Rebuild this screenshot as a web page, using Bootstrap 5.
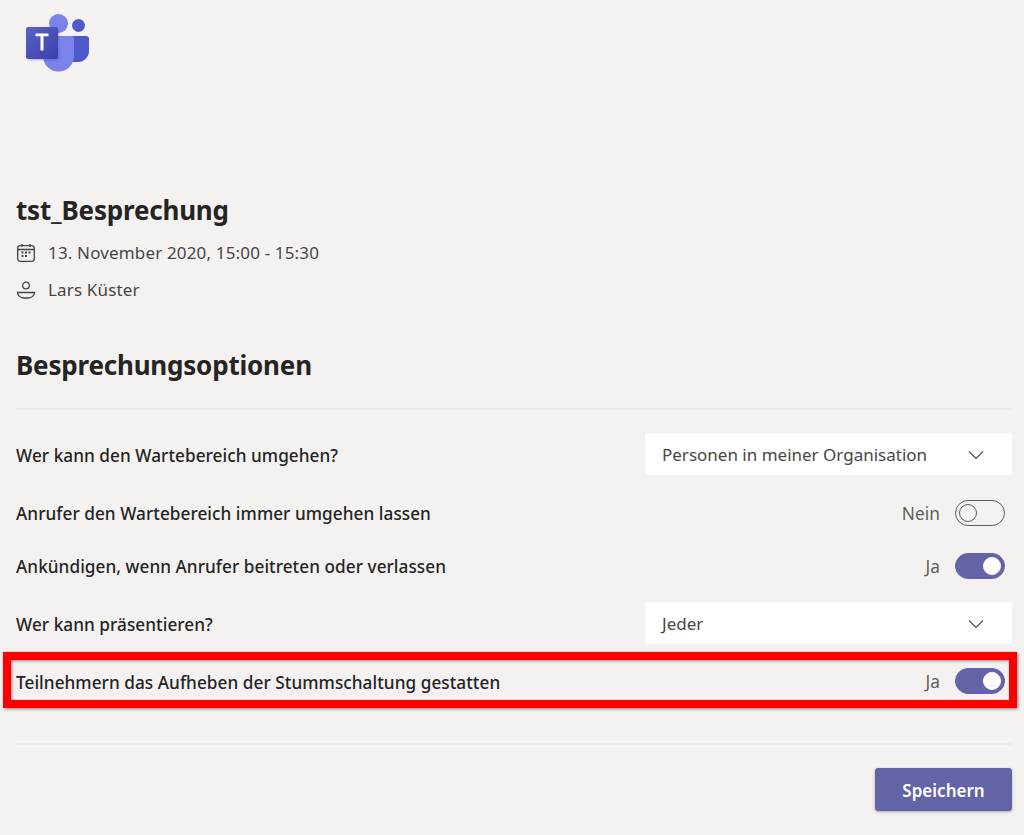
<!DOCTYPE html>
<html lang="de">
<head>
  <meta charset="UTF-8">
  <title>Besprechungsoptionen</title>
  <link href="https://cdn.jsdelivr.net/npm/bootstrap@5.3.2/dist/css/bootstrap.min.css" rel="stylesheet">
  <style>
    body {
      background-color: #f3f2f1;
      color: #252423;
      font-family: "Noto Sans", "Open Sans", sans-serif;
      overflow: hidden;
    }

    .page-wrap {
      height: 835px;
      padding: 0 12px 0 16px;
    }

    .logo-box {
      height: 186px;
      padding: 12px 0 0 9px;
    }

    .meeting-title {
      font-size: 26px;
      font-weight: 700;
      line-height: 48px;
      margin: 0;
      letter-spacing: -0.2px;
    }

    .meta-row {
      height: 37px;
      font-size: 17px;
      letter-spacing: .16px;
      color: #484644;
      gap: 12px;
    }

    .section-title {
      font-size: 26px;
      font-weight: 700;
      line-height: 36px;
      margin: 39px 0 25px;
      letter-spacing: -0.2px;
    }

    .rule-line {
      border-top: 2px solid #edebe9;
    }

    .rule-top { margin-bottom: 13px; }
    .rule-bottom { margin: 35px 0 23px; }

    .option-row {
      position: relative;
      font-size: 17.2px;
      font-weight: 500;
      letter-spacing: .05px;
    }

    .option-text { padding-top: 3px; }

    .row-select { height: 42px; margin: 10px 0; }
    .row-first { margin-bottom: 11px; }
    .row-toggle { height: 53px; }
    .row-marked { height: 54px; }

    .fake-select {
      width: 367px;
      height: 42px;
      background-color: #fff;
      border-radius: 3px;
      padding: 2px 28px 0 17px;
      font-size: 17px;
      font-weight: 400;
      letter-spacing: 0;
      color: #484644;
    }

    .toggle-label {
      font-size: 17.300px;
      font-weight: 400;
      color: #605e5c;
      margin-right: 15px;
      padding-top: 2px;
    }

    .switch-track {
      width: 50px;
      height: 26px;
      border-radius: 13px;
      border: 1px solid #605e5c;
      padding: 3px;
      margin-right: 7px;
    }

    .switch-on {
      background-color: #6264a7;
      border-color: #6264a7;
      justify-content: flex-end;
    }

    .switch-knob {
      width: 18px;
      height: 18px;
      border-radius: 50%;
      border: 1px solid #605e5c;
    }

    .switch-on .switch-knob {
      background-color: #fff;
      border-color: #fff;
    }

    .red-frame {
      position: absolute;
      left: -13px;
      right: -5px;
      top: -2px;
      bottom: 0;
      border: 8px solid #fe0000;
      box-shadow: 1px 1px 3px rgba(0, 0, 0, .45), inset 1px 1px 3px rgba(0, 0, 0, .45);
      pointer-events: none;
    }

    .save-btn {
      width: 137px;
      height: 43px;
      background-color: #6264a7;
      border-color: #6264a7;
      color: #fff;
      font-size: 17px;
      font-weight: 600;
      border-radius: 3px;
      box-shadow: 0 1px 3px rgba(0, 0, 0, .3);
      padding: 2px 0 0;
    }
  </style>
</head>
<body>
  <div class="page-wrap d-flex flex-column">
    <!-- Logo -->
    <div class="logo-box">
      <svg width="66" height="62" viewBox="0 0 66 62">
        <defs>
          <linearGradient id="tileGrad" x1="0" y1="0" x2="1" y2="1">
            <stop offset="0" stop-color="#5a62c3"/>
            <stop offset="1" stop-color="#3940ab"/>
          </linearGradient>
          <filter id="softShadow" x="-20%" y="-20%" width="140%" height="140%">
            <feGaussianBlur stdDeviation="1"/>
          </filter>
        </defs>
        <circle cx="53.500" cy="13.500" r="6.500" fill="#5059c9"/>
        <path d="M46 24h15a3 3 0 0 1 3 3v12a11 11 0 0 1-11 11h-7z" fill="#5059c9"/>
        <path d="M47 25v19a15 15 0 0 1-6 12z" fill="#3d44a8" opacity=".5" filter="url(#softShadow)"/>
        <circle cx="33.500" cy="11.500" r="9.500" fill="#7b83eb"/>
        <path d="M21 24h25a3 3 0 0 1 3 3v17a15.500 15.500 0 0 1-15.500 15.500a15.500 15.500 0 0 1-15.500-15.500v-17a3 3 0 0 1 3-3z" fill="#7b83eb"/>
        <rect x="3" y="17" width="31" height="31" rx="1" fill="#3940ab" opacity=".35" filter="url(#softShadow)"/>
        <rect x="1" y="15" width="32" height="32" rx="2" fill="url(#tileGrad)"/>
        <path d="M10.500 21.500h13v2.700h-5v14.300h-3v-14.300h-5z" fill="#fff"/>
      </svg>
    </div>

    <h1 class="meeting-title">tst_Besprechung</h1>
    <div class="meta-row d-flex align-items-center">
      <svg width="20" height="20" viewBox="0 0 20 20" fill="none" stroke="#484644" stroke-width="1.300">
        <rect x="1.700" y="2.700" width="16.600" height="15.600" rx="2.500"/>
        <path d="M1.700 6.500h16.600M6 1v3M14 1v3"/>
        <path d="M5.500 9.500h2M9 9.500h2M12.500 9.500h2M5.500 13h2M9 13h2" stroke-width="2"/>
      </svg>
      <span>13. November 2020, 15:00 - 15:30</span>
    </div>
    <div class="meta-row d-flex align-items-center">
      <svg width="20" height="20" viewBox="0 0 20 20" fill="none" stroke="#484644" stroke-width="1.300">
        <circle cx="10" cy="5.500" r="3.300"/>
        <path d="M1.500 12.500h17c0 3-3 5.500-6 5.500h-5c-3 0-6-2.500-6-5.500z"/>
      </svg>
      <span>Lars Küster</span>
    </div>

    <h2 class="section-title">Besprechungsoptionen</h2>
    <div class="rule-line rule-top"></div>

    <!-- Optionen -->
    <div class="option-row row-select row-first d-flex align-items-center justify-content-between">
      <span class="option-text">Wer kann den Wartebereich umgehen?</span>
      <div class="fake-select d-flex align-items-center justify-content-between">
        <span>Personen in meiner Organisation</span>
        <svg width="16" height="10" viewBox="0 0 16 10" fill="none" stroke="#484644" stroke-width="1.100"><path d="M1 1.500l7 7 7-7"/></svg>
      </div>
    </div>
    <div class="option-row row-toggle d-flex align-items-center justify-content-between">
      <span class="option-text">Anrufer den Wartebereich immer umgehen lassen</span>
      <div class="d-flex align-items-center">
        <span class="toggle-label">Nein</span>
        <div class="switch-track d-flex align-items-center"><div class="switch-knob"></div></div>
      </div>
    </div>
    <div class="option-row row-toggle d-flex align-items-center justify-content-between">
      <span class="option-text">Ankündigen, wenn Anrufer beitreten oder verlassen</span>
      <div class="d-flex align-items-center">
        <span class="toggle-label">Ja</span>
        <div class="switch-track switch-on d-flex align-items-center"><div class="switch-knob"></div></div>
      </div>
    </div>
    <div class="option-row row-select d-flex align-items-center justify-content-between">
      <span class="option-text">Wer kann präsentieren?</span>
      <div class="fake-select d-flex align-items-center justify-content-between">
        <span>Jeder</span>
        <svg width="16" height="10" viewBox="0 0 16 10" fill="none" stroke="#484644" stroke-width="1.100"><path d="M1 1.500l7 7 7-7"/></svg>
      </div>
    </div>
    <div class="option-row row-marked d-flex align-items-center justify-content-between">
      <span class="option-text">Teilnehmern das Aufheben der Stummschaltung gestatten</span>
      <div class="d-flex align-items-center">
        <span class="toggle-label">Ja</span>
        <div class="switch-track switch-on d-flex align-items-center"><div class="switch-knob"></div></div>
      </div>
      <div class="red-frame"></div>
    </div>

    <div class="rule-line rule-bottom"></div>
    <div class="d-flex justify-content-end">
      <button type="button" class="btn save-btn">Speichern</button>
    </div>
  </div>

  <script src="https://cdn.jsdelivr.net/npm/bootstrap@5.3.2/dist/js/bootstrap.bundle.min.js"></script>
</body>
</html>
